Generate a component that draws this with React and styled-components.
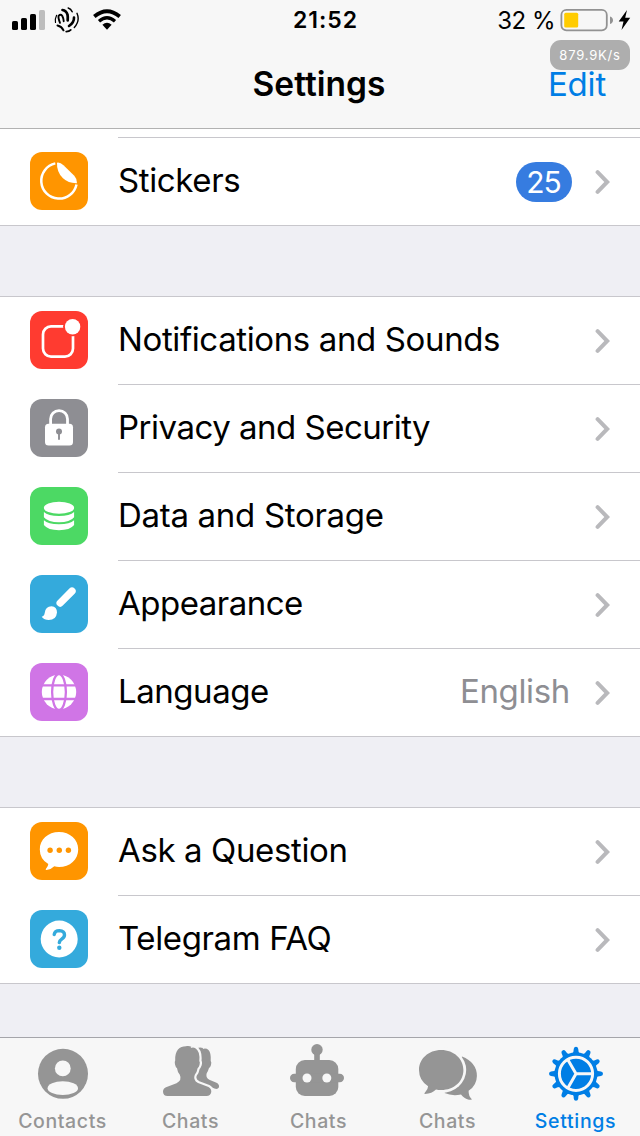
import React from "react";
import styled, { createGlobalStyle } from "styled-components";

const GlobalStyle = createGlobalStyle`
  * {
    box-sizing: border-box;
  }

  body {
    margin: 0;
    background-color: #efeff4;
    font-family: Inter, "Liberation Sans", sans-serif;
    -webkit-font-smoothing: antialiased;
  }
`;

const Screen = styled.div`
  display: flex;
  flex-direction: column;
  width: 640px;
  height: 1136px;
  overflow: hidden;
  background-color: #efeff4;
`;

const Header = styled.header`
  height: 129px;
  background-color: #f7f7f7;
  border-bottom: 1px solid #b2b2b2;
`;

const StatusBar = styled.div`
  position: relative;
  display: grid;
  grid-template-columns: 1fr auto 1fr;
  align-items: center;
  height: 40px;
  padding: 0 8px 0 11px;
`;

const StatusLeft = styled.div`
  display: flex;
  align-items: center;
  gap: 8px;

  svg:last-child {
    margin-left: 4px;
  }
`;

const StatusRight = styled.div`
  display: flex;
  align-items: center;
  justify-content: flex-end;
  gap: 5px;
`;

const Time = styled.span`
  padding-left: 8px;
  font-size: 23px;
  font-weight: 600;
  letter-spacing: 1px;
`;

const Percent = styled.span`
  font-size: 24px;
  letter-spacing: -0.5px;
`;

const SpeedBadge = styled.div`
  position: absolute;
  top: 40px;
  right: 10px;
  width: 80px;
  height: 30px;
  border-radius: 11px;
  background-color: #aeaeae;
  color: #fff;
  font-size: 13px;
  line-height: 31px;
  letter-spacing: 0.8px;
  text-align: center;
`;

const NavBar = styled.div`
  display: grid;
  grid-template-columns: 1fr auto 1fr;
  align-items: center;
  height: 88px;
  padding: 0 34px 0 32px;
`;

const Title = styled.h1`
  grid-column: 2;
  margin: 0;
  font-size: 33.5px;
  font-weight: 600;
  line-height: 88px;
  letter-spacing: 0;
`;

const EditButton = styled.a`
  justify-self: end;
  color: #007ee5;
  font-size: 33px;
  line-height: 86px;
  letter-spacing: -0.2px;
`;

const List = styled.main`
  display: flex;
  flex-direction: column;
  gap: 70px;
  flex: 1;
`;

const Group = styled.section`
  background-color: #fff;
  border-top: ${(props) => (props.$open ? "none" : "1px solid #c8c7cc")};
  border-bottom: 1px solid #c8c7cc;
`;

const PreviousRow = styled.div`
  height: 9px;
  margin-left: 118px;
  border-bottom: 1px solid #c8c7cc;
`;

const Row = styled.div`
  display: flex;
  align-items: flex-start;
  height: 88px;
  padding-left: 30px;

  &:last-child {
    height: 87px;
  }
`;

const Tile = styled.svg`
  flex: none;
  width: 58px;
  height: 58px;
  margin: 14px 30px 0 0;
  border-radius: 12px;
  background-color: ${(props) => props.color};
`;

const RowBody = styled.div`
  display: flex;
  align-items: center;
  flex: 1;
  height: 100%;
  padding-right: 29px;
  border-bottom: 1px solid #c8c7cc;

  ${Row}:last-child & {
    border-bottom: none;
  }
`;

const Label = styled.span`
  flex: 1;
  padding-bottom: 3px;
  font-size: 33px;
  letter-spacing: ${(props) => props.$spacing || -0.38}px;
`;

const Value = styled.span`
  padding-bottom: 3px;
  margin-right: 25px;
  color: #8e8e93;
  font-size: 33px;
  letter-spacing: -0.35px;
`;

const Badge = styled.span`
  width: 56px;
  height: 40px;
  margin-right: 23px;
  padding-right: 1px;
  border-radius: 20px;
  background-color: #367ce0;
  color: #fff;
  font-size: 30px;
  line-height: 40px;
  letter-spacing: -1px;
  text-align: center;
`;

const TabBar = styled.nav`
  display: grid;
  grid-template-columns: repeat(5, 128px);
  height: 99px;
  border-top: 1px solid #a5a5aa;
  background-color: #f7f7f7;
`;

const Tab = styled.a`
  display: flex;
  flex-direction: column;
  align-items: center;
  padding: 4px 3px 0 0;
  color: ${(props) => (props.$active ? "#007ee5" : "#959595")};
  font-size: 19.5px;
  font-weight: 500;
  letter-spacing: ${(props) => props.$spacing}px;

  &:nth-child(n + 4) {
    padding-right: 1px;
  }

  svg {
    display: block;
    flex: none;
    margin-left: 3px;
  }

  &:nth-child(n + 4) svg {
    margin-left: 1px;
  }
`;

const TabLabel = styled.span`
  line-height: 24px;
  margin-top: 7px;
`;

const Chevron = () => (
  <svg width="16" height="26" viewBox="0 0 16 26">
    <path d="M2.6 3.2 L12.2 13 L2.6 22.9" fill="none" stroke="#b9b9bc" strokeWidth="4" strokeLinecap="round" />
  </svg>
);

const Signal = () => (
  <svg width="34" height="20" viewBox="0 0 34 20">
    <rect x="1" y="11" width="6" height="9" rx="1.6" />
    <rect x="10" y="8" width="6" height="12" rx="1.6" />
    <rect x="19" y="4" width="6" height="16" rx="1.6" />
    <rect x="28" y="0" width="6" height="20" rx="1.6" fill="#bdbdbd" />
  </svg>
);

// striped ball drawn as separate bands
const Carrier = () => (
  <svg width="28" height="28" viewBox="0 0 28 28" fill="none" stroke="#000" strokeLinecap="round">
    <path d="M2.5 16.5 Q1.9 12.5 3.6 9.3" strokeWidth="1.2" />
    <path d="M7 16.8 Q5 12 5.6 9.8 Q7.6 7.6 9.2 9.8 Q10.4 12 10.7 15.2" strokeWidth="1.9" />
    <path d="M9.5 4 Q13.4 4.6 14.5 8.6 Q15 11.5 14.7 14.3" strokeWidth="2.7" />
    <path d="M15.2 2 Q18 2.8 19.2 5.8" strokeWidth="1.5" />
    <path d="M21 11.5 Q21.2 16.5 16 20" strokeWidth="2.6" />
    <path d="M24 7.3 Q27.3 14.8 21.3 21.5" strokeWidth="1.4" />
    <path d="M4.5 19.5 Q8.7 20.4 10.5 24.3" strokeWidth="2" />
    <path d="M13.2 25.6 Q16.2 25.5 17.8 23.8" strokeWidth="1.7" />
  </svg>
);

const Wifi = () => (
  <svg width="28" height="22" viewBox="0 0 28 22">
    <path d="M1.3 7.5 Q14 -3.1 26.7 7.5" fill="none" stroke="#000" strokeWidth="3.8" />
    <path d="M6 12.2 Q14 5.5 22 12.2" fill="none" stroke="#000" strokeWidth="3.4" />
    <path d="M9.4 15.8 Q14 11.9 18.6 15.8 L14 20.7 Z" />
  </svg>
);

const Battery = () => (
  <svg width="72" height="24" viewBox="0 0 72 24">
    <rect x="1.4" y="1.9" width="45.4" height="20.4" rx="5" fill="none" stroke="#929292" strokeWidth="1.8" />
    <rect x="4.2" y="4.8" width="14" height="14.8" rx="1.5" fill="#fc0" />
    <path d="M50 8.5 Q53 9.5 53 12.2 Q53 15 50 16 Z" fill="#929292" />
    <path d="M67 2 L58.7 13.5 H63.5 L61.5 21.9 L70.2 9.8 H65.2 Z" />
  </svg>
);

const StickerIcon = () => (
  <>
    <path d="M25.3 11.4 A17.8 17.8 0 1 0 46.5 32.4" fill="none" stroke="#fff" strokeWidth="2.5" />
    <path d="M27 10.7 Q30 10 33.5 13.2 L44.3 23.8 Q47.2 27 47 31.2 Q38.5 31.5 33 26.3 Q26.5 20 27 10.7 Z" fill="#fff" />
  </>
);

const NotificationIcon = () => (
  <>
    <rect x="13" y="15.4" width="30" height="30.2" rx="8" fill="none" stroke="#fff" strokeWidth="2.7" />
    <circle cx="42.6" cy="15.7" r="9.6" fill="#ff3b30" />
    <circle cx="42.6" cy="15.7" r="7.7" fill="#fff" />
  </>
);

const LockIcon = () => (
  <>
    <path d="M20.6 26 V20 A8.4 8.4 0 0 1 37.5 20 V26" fill="none" stroke="#fff" strokeWidth="2.8" />
    <rect x="15" y="24.7" width="28" height="21.7" rx="3.5" fill="#fff" />
    <circle cx="29" cy="32.4" r="3" fill="#8e8e93" />
    <path d="M29 33 V40" stroke="#8e8e93" strokeWidth="1.9" strokeLinecap="round" />
  </>
);

const StorageIcon = () => (
  <g fill="#fff">
    <ellipse cx="29" cy="20.8" rx="15.1" ry="6" />
    <path d="M13.9 25 Q18 29 29 29 Q40 29 44.1 25 V30.2 Q40 35.3 29 35.3 Q18 35.3 13.9 30.2 Z" />
    <path d="M13.9 33.2 Q18 37.3 29 37.3 Q40 37.3 44.1 33.2 V38 Q40 43.2 29 43.2 Q18 43.2 13.9 38 Z" />
  </g>
);

const BrushIcon = () => (
  <>
    <path d="M42 16.2 L30.2 28" stroke="#fff" strokeWidth="7.4" strokeLinecap="round" />
    <path d="M11.7 41.8 Q14.2 41.3 14.7 38 Q15.5 31.3 21.5 31.3 Q27 31.8 27 37.5 Q26.3 45 18.7 45 Q14.3 45 11.7 41.8 Z" fill="#fff" />
  </>
);

const GlobeIcon = () => (
  <>
    <circle cx="29" cy="29" r="17.2" fill="#fff" />
    <g fill="none" stroke="#d075e6" strokeWidth="2.3">
      <ellipse cx="29" cy="29" rx="6.9" ry="18" />
      <path d="M11 22.4 H47 M11 36 H47" />
    </g>
  </>
);

const QuestionBubbleIcon = () => (
  <>
    <path d="M29 10 C40 10 48.2 17.5 48.2 27.4 C48.2 37.3 40 45 29 45 Q26.5 45 24.3 44.3 Q21.5 47.3 16.5 48.1 Q15 48 16 46.7 Q18.2 44.3 18.3 42 Q9.8 37 9.8 27.4 C9.8 17.5 18 10 29 10 Z" fill="#fff" />
    <g fill="#ff9500">
      <circle cx="20.1" cy="28.2" r="2.7" />
      <circle cx="29.3" cy="28.2" r="2.7" />
      <circle cx="38.4" cy="28.2" r="2.7" />
    </g>
  </>
);

const FaqIcon = () => (
  <>
    <circle cx="29.2" cy="29" r="18.5" fill="#fff" />
    <path d="M24.2 24.5 Q24.8 20.6 29.4 20.6 Q34.5 20.8 34.5 25 Q34.5 27.2 31.7 29.1 Q29.5 30.6 29.3 32.6" fill="none" stroke="#34aadc" strokeWidth="3.4" strokeLinecap="round" />
    <circle cx="29.3" cy="37.7" r="2.2" fill="#34aadc" />
  </>
);

const ContactsTabIcon = () => (
  <>
    <circle cx="29" cy="31.8" r="25" />
    <circle cx="28.8" cy="26.4" r="7.9" fill="#f7f7f7" />
    <ellipse cx="28.8" cy="46.2" rx="15.2" ry="6.9" fill="#f7f7f7" />
  </>
);

const PERSON =
  "M13.2 18.5 C12.8 8 17.5 4.3 24 4.2 C26 3.8 28 4 29.3 4.7 L28.7 6 Q31 4.9 33 5.9 Q38.3 9 37.3 19 Q38.3 20 37.5 23 Q36.7 25.7 35.6 26.2 Q35 30 32.8 32.7 Q30.5 38 36 41 L46.5 45 Q49.5 46.5 49.3 50 Q48.5 54 44.5 54 H5.5 Q1.2 54 1 49.8 Q1 46.6 4 45.3 L14.5 41.2 Q20.3 38 17.8 32.7 Q15.5 30 15 26.2 Q13.7 25.5 13 22.5 Q12.4 19.5 13.2 18.5 Z";

const PeopleTabIcon = () => (
  <>
    <path d="M35.5 6 Q38 4.8 41 6 L40.8 7 Q44 5.9 46.5 8 Q49.3 11 48.7 19 Q49.8 20 49 23 Q48.3 25.5 47 26 Q46 29.5 44.7 31.3 Q43.3 35.7 47.3 37.7 L54.5 40.7 Q57.5 42.2 57 45.2 Q55.7 47.7 52.5 46.5 L34 39 L33 27 Z" />
    <path d={PERSON} stroke="#f7f7f7" strokeWidth="4.4" />
    <path d={PERSON} />
  </>
);

const BotTabIcon = () => (
  <>
    <circle cx="27" cy="7.7" r="5.7" />
    <rect x="24.2" y="10" width="5.6" height="10" />
    <rect x="5.8" y="18" width="42.5" height="36" rx="9" />
    <rect x="0" y="31.8" width="54" height="8.4" rx="4.2" />
    <circle cx="17" cy="36" r="4.5" fill="#f7f7f7" />
    <circle cx="36.8" cy="36" r="4.5" fill="#f7f7f7" />
  </>
);

const ChatsTabIcon = () => (
  <>
    <path d="M44 14.5 Q58.9 20.5 58.9 34 Q58.8 43.5 50.6 48.8 Q50.5 54.5 53.8 57.2 Q53.6 58.2 51 57.7 Q45.8 56.4 43 52.5 Q34 54.3 26.5 51 Z" />
    <ellipse cx="23.2" cy="28" rx="25" ry="23" fill="#f7f7f7" />
    <path d="M23.2 8 C36 8 45.4 17 45.4 28 C45.4 39.5 36 48 23.2 48 Q20.5 48 18 47.4 Q14 51.4 7 52 Q5.5 51.6 7 50.4 Q10 47.5 10.1 44.2 Q1 38.5 1 28 C1 17 10.4 8 23.2 8 Z" />
  </>
);

const teeth = Array.from({ length: 12 }, (_, i) => i * 30);

const SettingsTabIcon = () => (
  <g transform="translate(30 31.8)">
    {teeth.map((angle) => (
      <path key={angle} d="M-4 -19.5 Q-2.2 -21.5 -2.2 -25 Q-1.9 -27 0 -27 Q1.9 -27 2.2 -25 Q2.2 -21.5 4 -19.5 Z" transform={`rotate(${angle})`} />
    ))}
    <circle r="21.5" />
    <g fill="none" stroke="#f7f7f7" strokeWidth="3">
      <circle r="16.6" />
      <path d="M0 0 H16 M0 0 L-8 -13.9 M0 0 L-8 13.9" />
    </g>
  </g>
);

const groups = [
  [{ label: "Stickers", color: "#ff9500", icon: <StickerIcon />, badge: "25" }],
  [
    { label: "Notifications and Sounds", color: "#ff3b30", icon: <NotificationIcon /> },
    { label: "Privacy and Security", color: "#8e8e93", icon: <LockIcon />, spacing: -0.5 },
    { label: "Data and Storage", color: "#4cd964", icon: <StorageIcon />, spacing: -0.3 },
    { label: "Appearance", color: "#34aadc", icon: <BrushIcon />, spacing: -0.5 },
    { label: "Language", color: "#d075e6", icon: <GlobeIcon />, value: "English", spacing: -0.45 },
  ],
  [
    { label: "Ask a Question", color: "#ff9500", icon: <QuestionBubbleIcon /> },
    { label: "Telegram FAQ", color: "#34aadc", icon: <FaqIcon /> },
  ],
];

const tabs = [
  { label: "Contacts", icon: <ContactsTabIcon />, spacing: 0.6 },
  { label: "Chats", icon: <PeopleTabIcon />, spacing: 0.6 },
  { label: "Chats", icon: <BotTabIcon />, spacing: 0.6 },
  { label: "Chats", icon: <ChatsTabIcon />, spacing: 0.6 },
  { label: "Settings", icon: <SettingsTabIcon />, spacing: 0.7, active: true },
];

const SettingsRow = ({ label, color, icon, badge, value, spacing }) => {
  return (
    <Row>
      <Tile viewBox="0 0 58 58" color={color}>
        {icon}
      </Tile>
      <RowBody>
        <Label $spacing={spacing}>{label}</Label>
        {badge && <Badge>{badge}</Badge>}
        {value && <Value>{value}</Value>}
        <Chevron />
      </RowBody>
    </Row>
  );
};

const App = () => {
  return (
    <Screen>
      <GlobalStyle />
      <Header>
        <StatusBar>
          <StatusLeft>
            <Signal />
            <Carrier />
            <Wifi />
          </StatusLeft>
          <Time>21:52</Time>
          <StatusRight>
            <Percent>32 %</Percent>
            <Battery />
          </StatusRight>
          <SpeedBadge>879.9K/s</SpeedBadge>
        </StatusBar>
        <NavBar>
          <Title>Settings</Title>
          <EditButton>Edit</EditButton>
        </NavBar>
      </Header>
      <List>
        {groups.map((rows, index) => (
          <Group key={index} $open={index === 0}>
            {index === 0 && <PreviousRow />}
            {rows.map((row) => (
              <SettingsRow key={row.label} {...row} />
            ))}
          </Group>
        ))}
      </List>
      <TabBar>
        {tabs.map((tab, index) => (
          <Tab key={index} $active={tab.active} $spacing={tab.spacing}>
            <svg width="60" height="60" viewBox="0 0 60 60" fill="currentColor">
              {tab.icon}
            </svg>
            <TabLabel>{tab.label}</TabLabel>
          </Tab>
        ))}
      </TabBar>
    </Screen>
  );
};

export default App;
